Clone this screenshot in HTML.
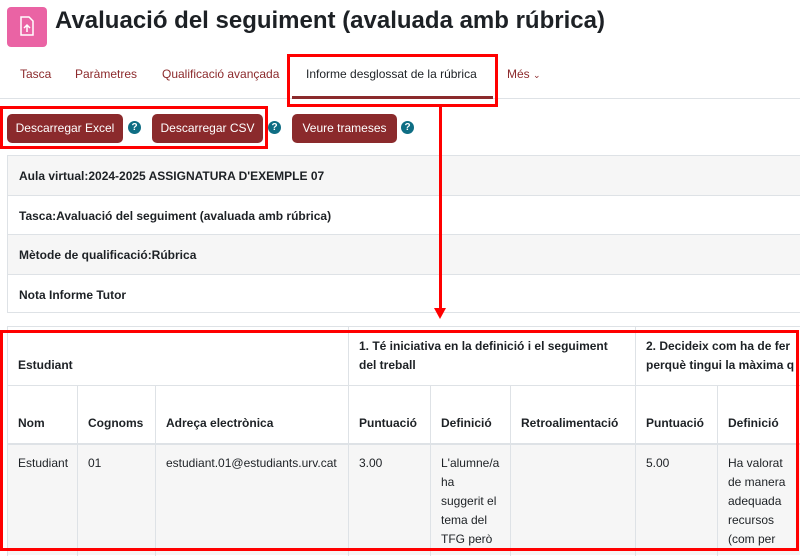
<!DOCTYPE html>
<html><head><meta charset="utf-8"><style>
*{box-sizing:border-box;margin:0;padding:0}
body{width:800px;height:551px;overflow:hidden;background:#fff;font-family:"Liberation Sans","DejaVu Sans",sans-serif;color:#1d2125;position:relative}
.a{position:absolute}
.nav{font-size:12px;color:#8c2a2c;top:67px}
.btn{position:absolute;top:114px;height:29px;background:#8b2a2c;color:#fff;border-radius:5px;font-size:12px;line-height:29px;text-align:center}
.help{position:absolute;top:121px;width:13px;height:13px;border-radius:50%;background:#0f6e84;color:#fff;font-size:10px;font-weight:bold;line-height:13px;text-align:center}
.info{position:absolute;left:7px;width:800px;height:40px;border:1px solid #dee2e6;border-bottom:none;font-size:12px;font-weight:bold;padding:13px 0 0 11px}
.g{background:#f6f6f6}
.c{position:absolute;border-left:1px solid #dee2e6;font-size:12px;padding-left:10px;line-height:19px}
.b{font-weight:bold}
</style></head><body>
<div class="a" style="left:7px;top:7px;width:40px;height:40px;background:#ea63a4;border-radius:4px"></div>
<svg class="a" style="left:19px;top:16px" width="16" height="20" viewBox="0 0 16 20"><path d="M2 1h8l4 4v14H2z" fill="none" stroke="#fff" stroke-width="1.5"/><path d="M8 16V9M5 12l3-3 3 3" fill="none" stroke="#fff" stroke-width="1.5"/></svg>
<div class="a" style="left:55px;top:7px;font-size:24px;font-weight:bold;color:#1d2125">Avaluació del seguiment (avaluada amb rúbrica)</div>
<div class="a nav" style="left:20px">Tasca</div>
<div class="a nav" style="left:75px">Paràmetres</div>
<div class="a nav" style="left:162px">Qualificació avançada</div>
<div class="a nav" style="left:306px;color:#1d2125">Informe desglossat de la rúbrica</div>
<div class="a nav" style="left:507px">Més <span style="font-size:9px">&#8964;</span></div>
<div class="a" style="left:0;top:98px;width:800px;height:1px;background:#dee2e6"></div>
<div class="a" style="left:292px;top:96px;width:201px;height:3px;background:#8b2a2c"></div>
<div class="btn" style="left:7px;width:116px">Descarregar Excel</div>
<div class="help" style="left:128px">?</div>
<div class="btn" style="left:152px;width:111px">Descarregar CSV</div>
<div class="help" style="left:268px">?</div>
<div class="btn" style="left:292px;width:105px">Veure trameses</div>
<div class="help" style="left:401px">?</div>
<div class="info g" style="top:155px">Aula virtual:2024-2025 ASSIGNATURA D'EXEMPLE 07</div>
<div class="info" style="top:195px">Tasca:Avaluació del seguiment (avaluada amb rúbrica)</div>
<div class="info g" style="top:234px">Mètode de qualificació:Rúbrica</div>
<div class="info" style="top:274px;height:39px;border-bottom:1px solid #dee2e6">Nota Informe Tutor</div>
<div class="a" style="left:7px;top:326px;width:800px;height:230px;border-left:1px solid #dee2e6;border-top:1px solid #dee2e6"></div>
<div class="a" style="left:7px;top:385px;width:800px;height:1px;background:#dee2e6"></div>
<div class="a" style="left:7px;top:443px;width:800px;height:2px;background:#dee2e6"></div>
<div class="a g" style="left:8px;top:445px;width:800px;height:110px"></div>
<div class="c b" style="left:7px;top:356px;border:none;padding-left:11px">Estudiant</div>
<div class="c b" style="left:348px;top:327px;height:58px;padding-top:10px;width:287px;white-space:nowrap">1. Té iniciativa en la definició i el seguiment<br>del treball</div>
<div class="c b" style="left:635px;top:327px;height:58px;padding-top:10px;width:200px;white-space:nowrap">2. Decideix com ha de fer<br>perquè tingui la màxima q</div>
<div class="c b" style="left:7px;top:414px;border:none;padding-left:11px">Nom</div>
<div class="c" style="left:77px;top:386px;height:170px"></div>
<div class="c" style="left:155px;top:386px;height:170px"></div>
<div class="c" style="left:430px;top:386px;height:170px"></div>
<div class="c" style="left:510px;top:386px;height:170px"></div>
<div class="c" style="left:717px;top:386px;height:170px"></div>
<div class="c" style="left:348px;top:386px;height:170px"></div>
<div class="c" style="left:635px;top:386px;height:170px"></div>
<div class="c b" style="left:78px;top:414px;border:none">Cognoms</div>
<div class="c b" style="left:156px;top:414px;border:none">Adreça electrònica</div>
<div class="c b" style="left:349px;top:414px;border:none">Puntuació</div>
<div class="c b" style="left:431px;top:414px;border:none">Definició</div>
<div class="c b" style="left:511px;top:414px;border:none">Retroalimentació</div>
<div class="c b" style="left:636px;top:414px;border:none">Puntuació</div>
<div class="c b" style="left:718px;top:414px;border:none">Definició</div>
<div class="c" style="left:7px;top:454px;border:none;padding-left:11px">Estudiant</div>
<div class="c" style="left:78px;top:454px;border:none">01</div>
<div class="c" style="left:156px;top:454px;border:none">estudiant.01@estudiants.urv.cat</div>
<div class="c" style="left:349px;top:454px;border:none">3.00</div>
<div class="c" style="left:431px;top:454px;border:none">L'alumne/a<br>ha<br>suggerit el<br>tema del<br>TFG però</div>
<div class="c" style="left:636px;top:454px;border:none">5.00</div>
<div class="c" style="left:718px;top:454px;border:none">Ha valorat<br>de manera<br>adequada<br>recursos<br>(com per</div>
<div class="a" style="left:287px;top:54px;width:211px;height:53px;border:3px solid #f00"></div>
<div class="a" style="left:0;top:106px;width:268px;height:43px;border:3px solid #f00"></div>
<div class="a" style="left:439px;top:107px;width:3px;height:204px;background:#f00"></div>
<div class="a" style="left:434px;top:308px;width:0;height:0;border-left:6.5px solid transparent;border-right:6.5px solid transparent;border-top:11px solid #f00"></div>
<div class="a" style="left:0;top:330px;width:799px;height:221px;border:3px solid #f00"></div>
</body></html>
